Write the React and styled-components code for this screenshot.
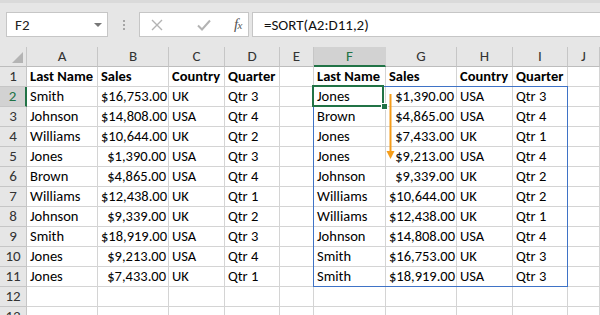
import React from "react";
import styled, { createGlobalStyle } from "styled-components";

const GlobalStyle = createGlobalStyle`
  html, body { margin: 0; padding: 0; background: #fff; }
  body { font-family: Calibri, Carlito, Lato, "Liberation Sans", sans-serif; }
`;

const Page = styled.div`
  width: 600px;
  height: 315px;
  overflow: hidden;
  background: #fff;
`;

const FormulaBar = styled.div`
  height: 47px;
  background: #e6e6e6;
  border-top: 3px solid #dadada;
  box-sizing: border-box;
  display: flex;
  align-items: flex-start;
  padding: 9px 0 0 6px;
`;

const Box = styled.div`
  height: 25px;
  box-sizing: border-box;
  background: #fff;
  border: 1px solid #c6c6c6;
  display: flex;
  align-items: center;
`;

const NameBox = styled(Box)`
  width: 102px;
  padding: 0 5px 0 8px;
  justify-content: space-between;
  font-size: 15px;
  color: #222;
`;

const Caret = styled.span`
  width: 0;
  height: 0;
  border-left: 4px solid transparent;
  border-right: 4px solid transparent;
  border-top: 4px solid #777;
`;

const Grip = styled.div`
  width: 31px;
  height: 25px;
  display: flex;
  flex-direction: column;
  align-items: center;
  justify-content: center;
  gap: 2px;
  & > i {
    display: block;
    width: 2px;
    height: 2px;
    background: #a6a6a6;
  }
`;

const FxBox = styled(Box)`
  width: 110px;
  padding: 0 6px 0 0;
  justify-content: space-between;
`;

const IconSlot = styled.span`
  width: 34px;
  display: flex;
  justify-content: center;
  align-items: center;
`;

const Fx = styled.span`
  font-family: "Liberation Serif", serif;
  font-style: italic;
  font-size: 15px;
  color: #555;
  letter-spacing: -0.5px;
  & > small { font-size: 11px; }
`;

const FormulaInput = styled(Box)`
  margin-left: 3px;
  flex: 1;
  border-right: none;
  padding-left: 11px;
  font-size: 15px;
  color: #111;
`;

const SheetWrap = styled.div`
  position: relative;
`;

const Grid = styled.div`
  display: grid;
  grid-template-columns: 27px 71px 71px 56px 55px 34px 72px 71px 56px 55px 32px;
  grid-auto-rows: 20px;
`;

const Cell = styled.div`
  box-sizing: border-box;
  border-right: 1px solid #d4d4d4;
  border-bottom: 1px solid #d4d4d4;
  font-size: 14.5px;
  line-height: 19px;
  padding: 0 2px 0 3px;
  white-space: nowrap;
  overflow: hidden;
  color: #000;
  font-weight: ${(p) => (p.$bold ? 700 : 400)};
  text-align: ${(p) => (p.$right ? "right" : "left")};
`;

const ColHead = styled.div`
  box-sizing: border-box;
  background: ${(p) => (p.$active ? "#d2d2d2" : "#e6e6e6")};
  border-right: 1px solid ${(p) => (p.$active ? "#d2d2d2" : "#c6c6c6")};
  border-bottom: ${(p) => (p.$active ? "2px solid #217346" : "1px solid #bdbdbd")};
  color: ${(p) => (p.$active ? "#217346" : "#333")};
  font-size: 15px;
  line-height: 19px;
  text-align: center;
`;

const Corner = styled.div`
  box-sizing: border-box;
  background: #e6e6e6;
  border-right: 1px solid #c6c6c6;
  border-bottom: 1px solid #bdbdbd;
  position: relative;
  &::after {
    content: "";
    position: absolute;
    right: 3px;
    bottom: 3px;
    border-left: 11px solid transparent;
    border-bottom: 11px solid #b4b4b4;
  }
`;

const RowHead = styled.div`
  box-sizing: border-box;
  background: ${(p) => (p.$active ? "#d2d2d2" : "#e6e6e6")};
  border-right: ${(p) => (p.$active ? "2px solid #217346" : "1px solid #c6c6c6")};
  border-bottom: 1px solid #c6c6c6;
  color: ${(p) => (p.$active ? "#217346" : "#333")};
  font-size: 15px;
  line-height: 19px;
  text-align: center;
`;

const SpillRange = styled.div`
  position: absolute;
  left: 313px;
  top: 39px;
  width: 255px;
  height: 201px;
  box-sizing: border-box;
  border: 1px solid #3f73c6;
  pointer-events: none;
`;

const ActiveCell = styled.div`
  position: absolute;
  left: 312px;
  top: 38px;
  width: 72px;
  height: 22px;
  box-sizing: border-box;
  border: 2px solid #217346;
  pointer-events: none;
`;

const FillHandle = styled.div`
  position: absolute;
  left: 381px;
  top: 56px;
  width: 7px;
  height: 7px;
  box-sizing: border-box;
  background: #217346;
  border: 1px solid #fff;
`;

const Arrow = styled.svg`
  position: absolute;
  left: 384px;
  top: 46px;
  pointer-events: none;
`;

const cols = ["A", "B", "C", "D", "E", "F", "G", "H", "I", "J"];

const source = [
  ["Smith", "$16,753.00", "UK", "Qtr 3"],
  ["Johnson", "$14,808.00", "USA", "Qtr 4"],
  ["Williams", "$10,644.00", "UK", "Qtr 2"],
  ["Jones", "$1,390.00", "USA", "Qtr 3"],
  ["Brown", "$4,865.00", "USA", "Qtr 4"],
  ["Williams", "$12,438.00", "UK", "Qtr 1"],
  ["Johnson", "$9,339.00", "UK", "Qtr 2"],
  ["Smith", "$18,919.00", "USA", "Qtr 3"],
  ["Jones", "$9,213.00", "USA", "Qtr 4"],
  ["Jones", "$7,433.00", "UK", "Qtr 1"],
];

const toNum = (s) => Number(s.replace(/[$,]/g, ""));
const sorted = [...source].sort((a, b) => toNum(a[1]) - toNum(b[1]));
const header = ["Last Name", "Sales", "Country", "Quarter"];

const Record = ({ row, bold }) =>
  row.map((v, i) => (
    <Cell key={i} $bold={bold} $right={!bold && i === 1}>
      {v}
    </Cell>
  ));

export default function App() {
  const rows = [];
  for (let r = 1; r <= 13; r++) {
    let left = ["", "", "", ""];
    let right = ["", "", "", ""];
    const bold = r === 1;
    if (r === 1) {
      left = header;
      right = header;
    } else if (r <= 11) {
      left = source[r - 2];
      right = sorted[r - 2];
    }
    rows.push(
      <React.Fragment key={r}>
        <RowHead $active={r === 2}>{r}</RowHead>
        <Record row={left} bold={bold} />
        <Cell />
        <Record row={right} bold={bold} />
        <Cell />
      </React.Fragment>
    );
  }

  return (
    <Page>
      <GlobalStyle />
      <FormulaBar>
        <NameBox>
          F2
          <Caret />
        </NameBox>
        <Grip>
          <i />
          <i />
          <i />
        </Grip>
        <FxBox>
          <IconSlot>
            <svg width="12" height="12" viewBox="0 0 12 12">
              <path d="M1 1 L11 11 M11 1 L1 11" stroke="#b3b3b3" strokeWidth="1.4" />
            </svg>
          </IconSlot>
          <IconSlot>
            <svg width="14" height="12" viewBox="0 0 14 12">
              <path d="M1 6.5 L5 10.5 L13 1.5" stroke="#b3b3b3" strokeWidth="2" fill="none" />
            </svg>
          </IconSlot>
          <Fx>
            f<small>x</small>
          </Fx>
        </FxBox>
        <FormulaInput>=SORT(A2:D11,2)</FormulaInput>
      </FormulaBar>
      <SheetWrap>
        <Grid>
          <Corner />
          {cols.map((c) => (
            <ColHead key={c} $active={c === "F"}>
              {c}
            </ColHead>
          ))}
          {rows}
        </Grid>
        <SpillRange />
        <ActiveCell />
        <FillHandle />
        <Arrow width="14" height="70" viewBox="0 0 14 70">
          <path d="M6.5 1 V60" stroke="#f59d1a" strokeWidth="2" />
          <path d="M2.5 58 L10.5 58 L6.5 66 Z" fill="#f59d1a" />
        </Arrow>
      </SheetWrap>
    </Page>
  );
}
